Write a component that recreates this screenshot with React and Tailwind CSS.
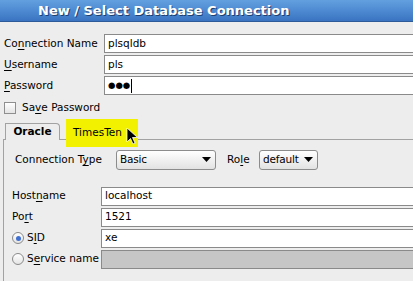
// New / Select Database Connection dialog (SQL Developer style)
import React from 'react';

// ── Label with an underlined mnemonic letter
function Mn({ pre, u, post }) {
  return (
    <span className="whitespace-nowrap">
      {pre}
      <span className="underline underline-offset-2">{u}</span>
      {post}
    </span>
  );
}

// ── Plain text field (runs past the right edge, as in the dialog)
function Field({ value, gray = false, caret = false }) {
  return (
    <div
      className={`flex-1 -mr-[4px] h-[19px] border border-[#8a8a8a] flex items-center pl-[3px] ${
        gray ? 'bg-[#c6c6c6]' : 'bg-white'
      }`}
    >
      <span className={caret ? 'text-[8.5px]' : ''}>{value}</span>
      {caret && <span className="ml-[1px] w-px h-[14px] bg-black" />}
    </div>
  );
}

// ── Combo box with gradient and down triangle
function Combo({ value, w }) {
  return (
    <div
      className={`${w} h-[20px] border border-[#8c8c8c] rounded-[3px] bg-gradient-to-b from-white to-[#e2e2e2] flex items-center justify-between pl-[3px] pr-[4px]`}
    >
      <span className="tracking-[-0.2px]">{value}</span>
      <svg width="9" height="5" viewBox="0 0 9 5">
        <path d="M0 0 H9 L4.5 5 Z" fill="#000" />
      </svg>
    </div>
  );
}

// ── Radio button
function Radio({ checked }) {
  return (
    <span className="w-[12px] h-[12px] rounded-full border border-[#8a8a8a] bg-gradient-to-b from-white to-[#e4e4e4] flex items-center justify-center">
      {checked && <span className="w-[5px] h-[5px] rounded-full bg-[#3f6fd0]" />}
    </span>
  );
}

export default function App() {
  return (
    <div className="relative w-[413px] h-[281px] overflow-hidden bg-[#ededed] text-black text-[10.5px] font-['DejaVu_Sans',sans-serif]">

      {/* ── Title bar ── */}
      <div className="h-[22px] bg-gradient-to-b from-[#62a0e0] to-[#3a74c2] border-b border-[#2d5a98] flex items-center pl-[38px]">
        <span className="text-white font-bold text-[13px] [text-shadow:1px_1px_0_#1f3f6e]">
          New / Select Database Connection
        </span>
      </div>

      {/* ── Top form ── */}
      <div className="flex flex-col gap-[2px] pt-[12px]">
        <div className="flex items-center">
          <div className="w-[104px] pl-[4px]"><Mn pre="Co" u="n" post="nection Name" /></div>
          <Field value="plsqldb" />
        </div>
        <div className="flex items-center">
          <div className="w-[104px] pl-[4px]"><Mn pre="" u="U" post="sername" /></div>
          <Field value="pls" />
        </div>
        <div className="flex items-center">
          <div className="w-[104px] pl-[4px]"><Mn pre="" u="P" post="assword" /></div>
          <Field value="●●●" caret />
        </div>
      </div>

      {/* ── Save password ── */}
      <div className="flex items-center gap-[6px] pl-[4px] mt-[5px]">
        <span className="w-[12px] h-[12px] border border-[#8f8f8f] bg-gradient-to-b from-white to-[#e4e4e4]" />
        <Mn pre="Sa" u="v" post="e Password" />
      </div>

      {/* ── Tabs ── */}
      <div className="flex items-end pl-[5px] mt-[6px] h-[17px]">
        <div className="w-[55px] h-[17px] border border-b-0 border-[#a2a2a2] rounded-tr-[4px] bg-[#ededed] flex items-center justify-center font-bold relative top-px">
          Oracle
        </div>
      </div>

      {/* ── Tab panel ── */}
      <div className="ml-[3px] border-l border-t border-[#a2a2a2] h-[200px] pt-[10px]">
        <div className="flex items-center h-[20px] pl-[11px]">
          <div className="w-[101px]"><Mn pre="Connection T" u="y" post="pe" /></div>
          <Combo value="Basic" w="w-[100px]" />
          <div className="ml-[11px] w-[32px]"><Mn pre="Ro" u="l" post="e" /></div>
          <Combo value="default" w="w-[59px]" />
        </div>

        <div className="flex flex-col gap-[2px] mt-[17px]">
          <div className="flex items-center">
            <div className="w-[97px] pl-[8px]"><Mn pre="Host" u="n" post="ame" /></div>
            <Field value="localhost" />
          </div>
          <div className="flex items-center">
            <div className="w-[97px] pl-[8px]"><Mn pre="Po" u="r" post="t" /></div>
            <Field value="1521" />
          </div>
          <div className="flex items-center">
            <div className="w-[97px] pl-[8px] flex items-center gap-[3px]">
              <Radio checked />
              <Mn pre="S" u="I" post="D" />
            </div>
            <Field value="xe" />
          </div>
          <div className="flex items-center">
            <div className="w-[97px] pl-[8px] flex items-center gap-[3px]">
              <Radio />
              <Mn pre="S" u="e" post="rvice name" />
            </div>
            <Field value="" gray />
          </div>
        </div>
      </div>

      {/* ── Highlighted TimesTen tab (overlay) ── */}
      <div className="absolute left-[66px] top-[119px] w-[72px] h-[28px] bg-[#f2f200] pl-[7px] pt-[6px]">
        TimesTen
      </div>

      {/* ── Mouse pointer ── */}
      <svg className="absolute left-[126px] top-[127px]" width="13" height="19" viewBox="0 0 13 19">
        <path d="M1 1 L1 15 L4.5 11.5 L7 17 L9 16 L6.5 10.5 L11.5 10.5 Z" fill="#000" stroke="#fff" strokeWidth="0.8" />
      </svg>
    </div>
  );
}
